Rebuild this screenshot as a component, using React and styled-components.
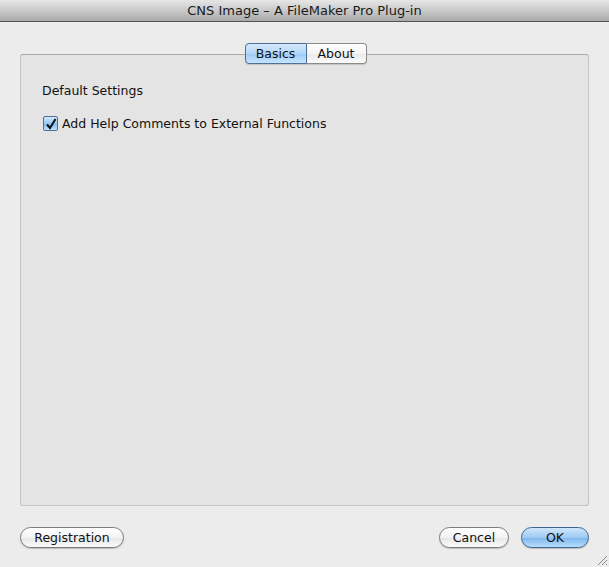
import React from 'react';
import styled, { createGlobalStyle } from 'styled-components';

const Global = createGlobalStyle`
  *, *::before, *::after { box-sizing: border-box; }
  html, body { margin: 0; padding: 0; background: #ececec; }
  body { font-family: "DejaVu Sans", "Liberation Sans", sans-serif; }
`;

const Window = styled.div`
  position: relative;
  width: 609px;
  height: 567px;
  display: flex;
  flex-direction: column;
  background: #ececec;
  overflow: hidden;
`;

const TitleBar = styled.div`
  height: 22px;
  flex: none;
  display: flex;
  align-items: center;
  justify-content: center;
  background: linear-gradient(#e6e6e6, #c9c9c9 50%, #a9a9a9);
  border-bottom: 1px solid #555;
  font-size: 13px;
  color: #1a1a1a;
`;

const Body = styled.div`
  flex: 1;
  display: flex;
  flex-direction: column;
  padding: 21px 20px 0 20px;
`;

const TabRow = styled.div`
  position: relative;
  z-index: 1;
  display: flex;
  justify-content: center;
  padding-left: 2px;
`;

const Tab = styled.div`
  height: 21px;
  display: flex;
  align-items: center;
  justify-content: center;
  width: ${p => p.$w}px;
  font-size: 12.5px;
  color: #111;
  border: 1px solid ${p => (p.$active ? '#4d6f98' : '#8a8a8a')};
  background: ${p =>
    p.$active
      ? 'linear-gradient(#d6eafc, #b3d6f8 50%, #9ccbf6 51%, #c6e4fc)'
      : 'linear-gradient(#ffffff, #f4f4f4 50%, #e9e9e9 51%, #fbfbfb)'};
  border-radius: ${p => (p.$first ? '4px 0 0 4px' : '0 4px 4px 0')};
  border-left-width: ${p => (p.$first ? '1px' : '0')};
  box-shadow: 0 1px 1px rgba(0, 0, 0, 0.15);
`;

const GroupBox = styled.div`
  margin-top: -10px;
  height: 452px;
  background: #e4e4e4;
  border: 1px solid #c4c4c4;
  border-top-color: #a9a9a9;
  border-radius: 3px;
  padding: 28px 0 0 21px;
  display: flex;
  flex-direction: column;
  gap: 18px;
`;

const Label = styled.div`
  font-size: 12.5px;
  color: #111;
`;

const CheckRow = styled.label`
  display: flex;
  align-items: center;
  gap: 4px;
  font-size: 12.5px;
  color: #111;
  margin-left: 1px;
`;

const Box = styled.span`
  width: 15px;
  height: 15px;
  border: 1px solid #4d6f98;
  border-radius: 2px;
  background: linear-gradient(#d2e8fc, #98c8f4 50%, #7fb8f0 51%, #c2e2fc);
  display: flex;
  align-items: center;
  justify-content: center;
`;

const Footer = styled.div`
  display: flex;
  align-items: center;
  margin-top: 21px;
  gap: 12px;
`;

const Button = styled.div`
  height: 21px;
  width: ${p => p.$w}px;
  display: flex;
  align-items: center;
  justify-content: center;
  font-size: 12.5px;
  color: #111;
  border-radius: 11px;
  border: 1px solid ${p => (p.$primary ? '#3f6494' : '#7b7b7b')};
  background: ${p =>
    p.$primary
      ? 'linear-gradient(#cfe6fb, #9fcaf3 50%, #7db6ee 51%, #b6dcfb)'
      : 'linear-gradient(#ffffff, #f3f3f3 50%, #e6e6e6 51%, #fafafa)'};
  box-shadow: 0 1px 1px rgba(0, 0, 0, 0.2);
`;

const Spacer = styled.div`
  flex: 1;
`;

const Grip = styled.svg`
  position: absolute;
  right: 1px;
  bottom: 1px;
`;

export default function App() {
  return (
    <>
      <Global />
      <Window>
        <TitleBar>CNS Image – A FileMaker Pro Plug-in</TitleBar>
        <Body>
          <TabRow>
            <Tab $first $active $w={62}>Basics</Tab>
            <Tab $w={60}>About</Tab>
          </TabRow>
          <GroupBox>
            <Label>Default Settings</Label>
            <CheckRow>
              <Box>
                <svg width="12" height="12" viewBox="0 0 12 12">
                  <path d="M2 6.5 L5 10 L10.5 1" fill="none" stroke="#111" strokeWidth="2" />
                </svg>
              </Box>
              Add Help Comments to External Functions
            </CheckRow>
          </GroupBox>
          <Footer>
            <Button $w={104}>Registration</Button>
            <Spacer />
            <Button $w={70}>Cancel</Button>
            <Button $primary $w={68}>OK</Button>
          </Footer>
        </Body>
        <Grip width="12" height="12" viewBox="0 0 12 12">
          <path d="M11 2 L2 11 M11 6 L6 11 M11 10 L10 11" stroke="#8a8a8a" strokeWidth="1" />
        </Grip>
      </Window>
    </>
  );
}
